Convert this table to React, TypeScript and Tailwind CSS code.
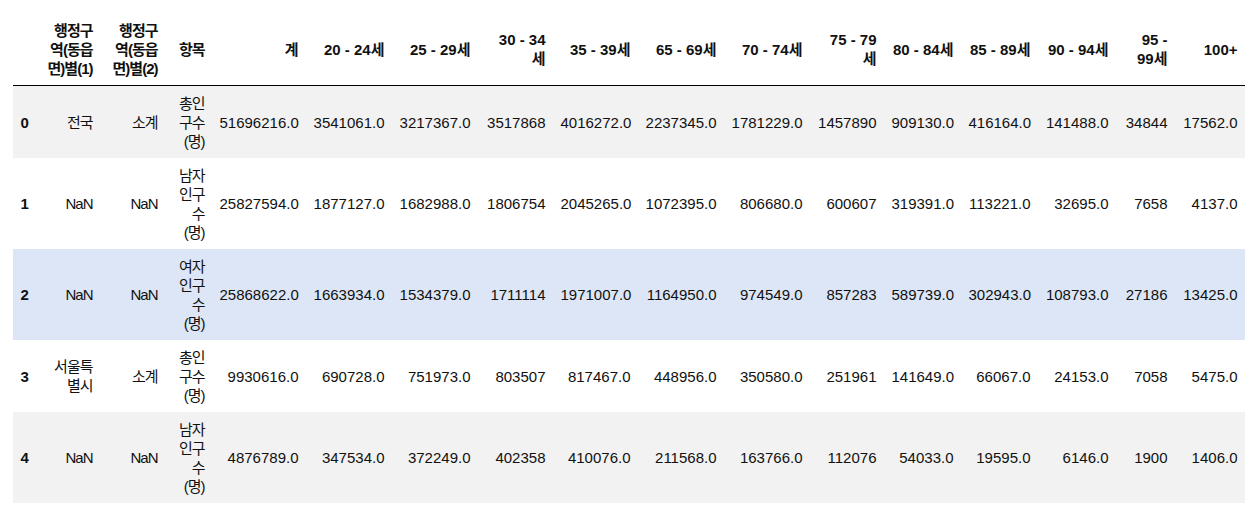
import React from "react";

type Row = {
  idx: number;
  region1: string[];
  region2: string[];
  item: string[];
  values: string[];
  bg: string;
};

const colWidths = [
  "w-[23px]",
  "w-[64px]",
  "w-[65px]",
  "w-[47px]",
  "w-[94px]",
  "w-[86px]",
  "w-[86px]",
  "w-[75px]",
  "w-[85px]",
  "w-[86px]",
  "w-[86px]",
  "w-[74px]",
  "w-[77px]",
  "w-[77px]",
  "w-[78px]",
  "w-[59px]",
  "w-[70px]",
];

const ageHeaders: string[][] = [
  ["계"],
  ["20 - 24세"],
  ["25 - 29세"],
  ["30 - 34", "세"],
  ["35 - 39세"],
  ["65 - 69세"],
  ["70 - 74세"],
  ["75 - 79", "세"],
  ["80 - 84세"],
  ["85 - 89세"],
  ["90 - 94세"],
  ["95 -", "99세"],
  ["100+"],
];

const rows: Row[] = [
  {
    idx: 0,
    region1: ["전국"],
    region2: ["소계"],
    item: ["총인", "구수", "(명)"],
    values: ["51696216.0", "3541061.0", "3217367.0", "3517868", "4016272.0", "2237345.0", "1781229.0", "1457890", "909130.0", "416164.0", "141488.0", "34844", "17562.0"],
    bg: "bg-[#f2f2f2]",
  },
  {
    idx: 1,
    region1: ["NaN"],
    region2: ["NaN"],
    item: ["남자", "인구", "수", "(명)"],
    values: ["25827594.0", "1877127.0", "1682988.0", "1806754", "2045265.0", "1072395.0", "806680.0", "600607", "319391.0", "113221.0", "32695.0", "7658", "4137.0"],
    bg: "bg-white",
  },
  {
    idx: 2,
    region1: ["NaN"],
    region2: ["NaN"],
    item: ["여자", "인구", "수", "(명)"],
    values: ["25868622.0", "1663934.0", "1534379.0", "1711114", "1971007.0", "1164950.0", "974549.0", "857283", "589739.0", "302943.0", "108793.0", "27186", "13425.0"],
    bg: "bg-[#dce6f6]",
  },
  {
    idx: 3,
    region1: ["서울특", "별시"],
    region2: ["소계"],
    item: ["총인", "구수", "(명)"],
    values: ["9930616.0", "690728.0", "751973.0", "803507", "817467.0", "448956.0", "350580.0", "251961", "141649.0", "66067.0", "24153.0", "7058", "5475.0"],
    bg: "bg-white",
  },
  {
    idx: 4,
    region1: ["NaN"],
    region2: ["NaN"],
    item: ["남자", "인구", "수", "(명)"],
    values: ["4876789.0", "347534.0", "372249.0", "402358", "410076.0", "211568.0", "163766.0", "112076", "54033.0", "19595.0", "6146.0", "1900", "1406.0"],
    bg: "bg-[#f2f2f2]",
  },
];

const Lines = ({ lines, tight }: { lines: string[]; tight?: boolean }) => (
  <>
    {lines.map((l, i) => (
      <div key={i} className={tight ? "whitespace-nowrap tracking-[-1px]" : "whitespace-nowrap"}>
        {l}
      </div>
    ))}
  </>
);

const cell = "px-[7.5px] py-[7.5px] align-middle text-right";

export default function App() {
  return (
    <div className="min-h-screen bg-white pt-[13px] pl-[13px]">
      <table className="table-fixed border-collapse w-[1232px] text-[15px] leading-[19px] text-[#111] font-['Liberation_Sans','Noto_Sans_CJK_KR',sans-serif]">
        <colgroup>
          {colWidths.map((w, i) => (
            <col key={i} className={w} />
          ))}
        </colgroup>
        <thead>
          <tr className="border-b border-black font-bold">
            <th className={cell}></th>
            <th className={cell}>
              <Lines lines={["행정구", "역(동읍", "면)별(1)"]} tight />
            </th>
            <th className={cell}>
              <Lines lines={["행정구", "역(동읍", "면)별(2)"]} tight />
            </th>
            <th className={cell}>
              <Lines lines={["항목"]} tight />
            </th>
            {ageHeaders.map((h, i) => (
              <th key={i} className={cell}>
                <Lines lines={h} />
              </th>
            ))}
          </tr>
        </thead>
        <tbody>
          {rows.map((r) => (
            <tr key={r.idx} className={r.bg}>
              <th className="px-[7.5px] py-[7.5px] align-middle text-left font-bold">{r.idx}</th>
              <td className={cell}>
                <Lines lines={r.region1} tight />
              </td>
              <td className={cell}>
                <Lines lines={r.region2} tight />
              </td>
              <td className={cell}>
                <Lines lines={r.item} tight />
              </td>
              {r.values.map((v, i) => (
                <td key={i} className={cell}>
                  {v}
                </td>
              ))}
            </tr>
          ))}
        </tbody>
      </table>
    </div>
  );
}
